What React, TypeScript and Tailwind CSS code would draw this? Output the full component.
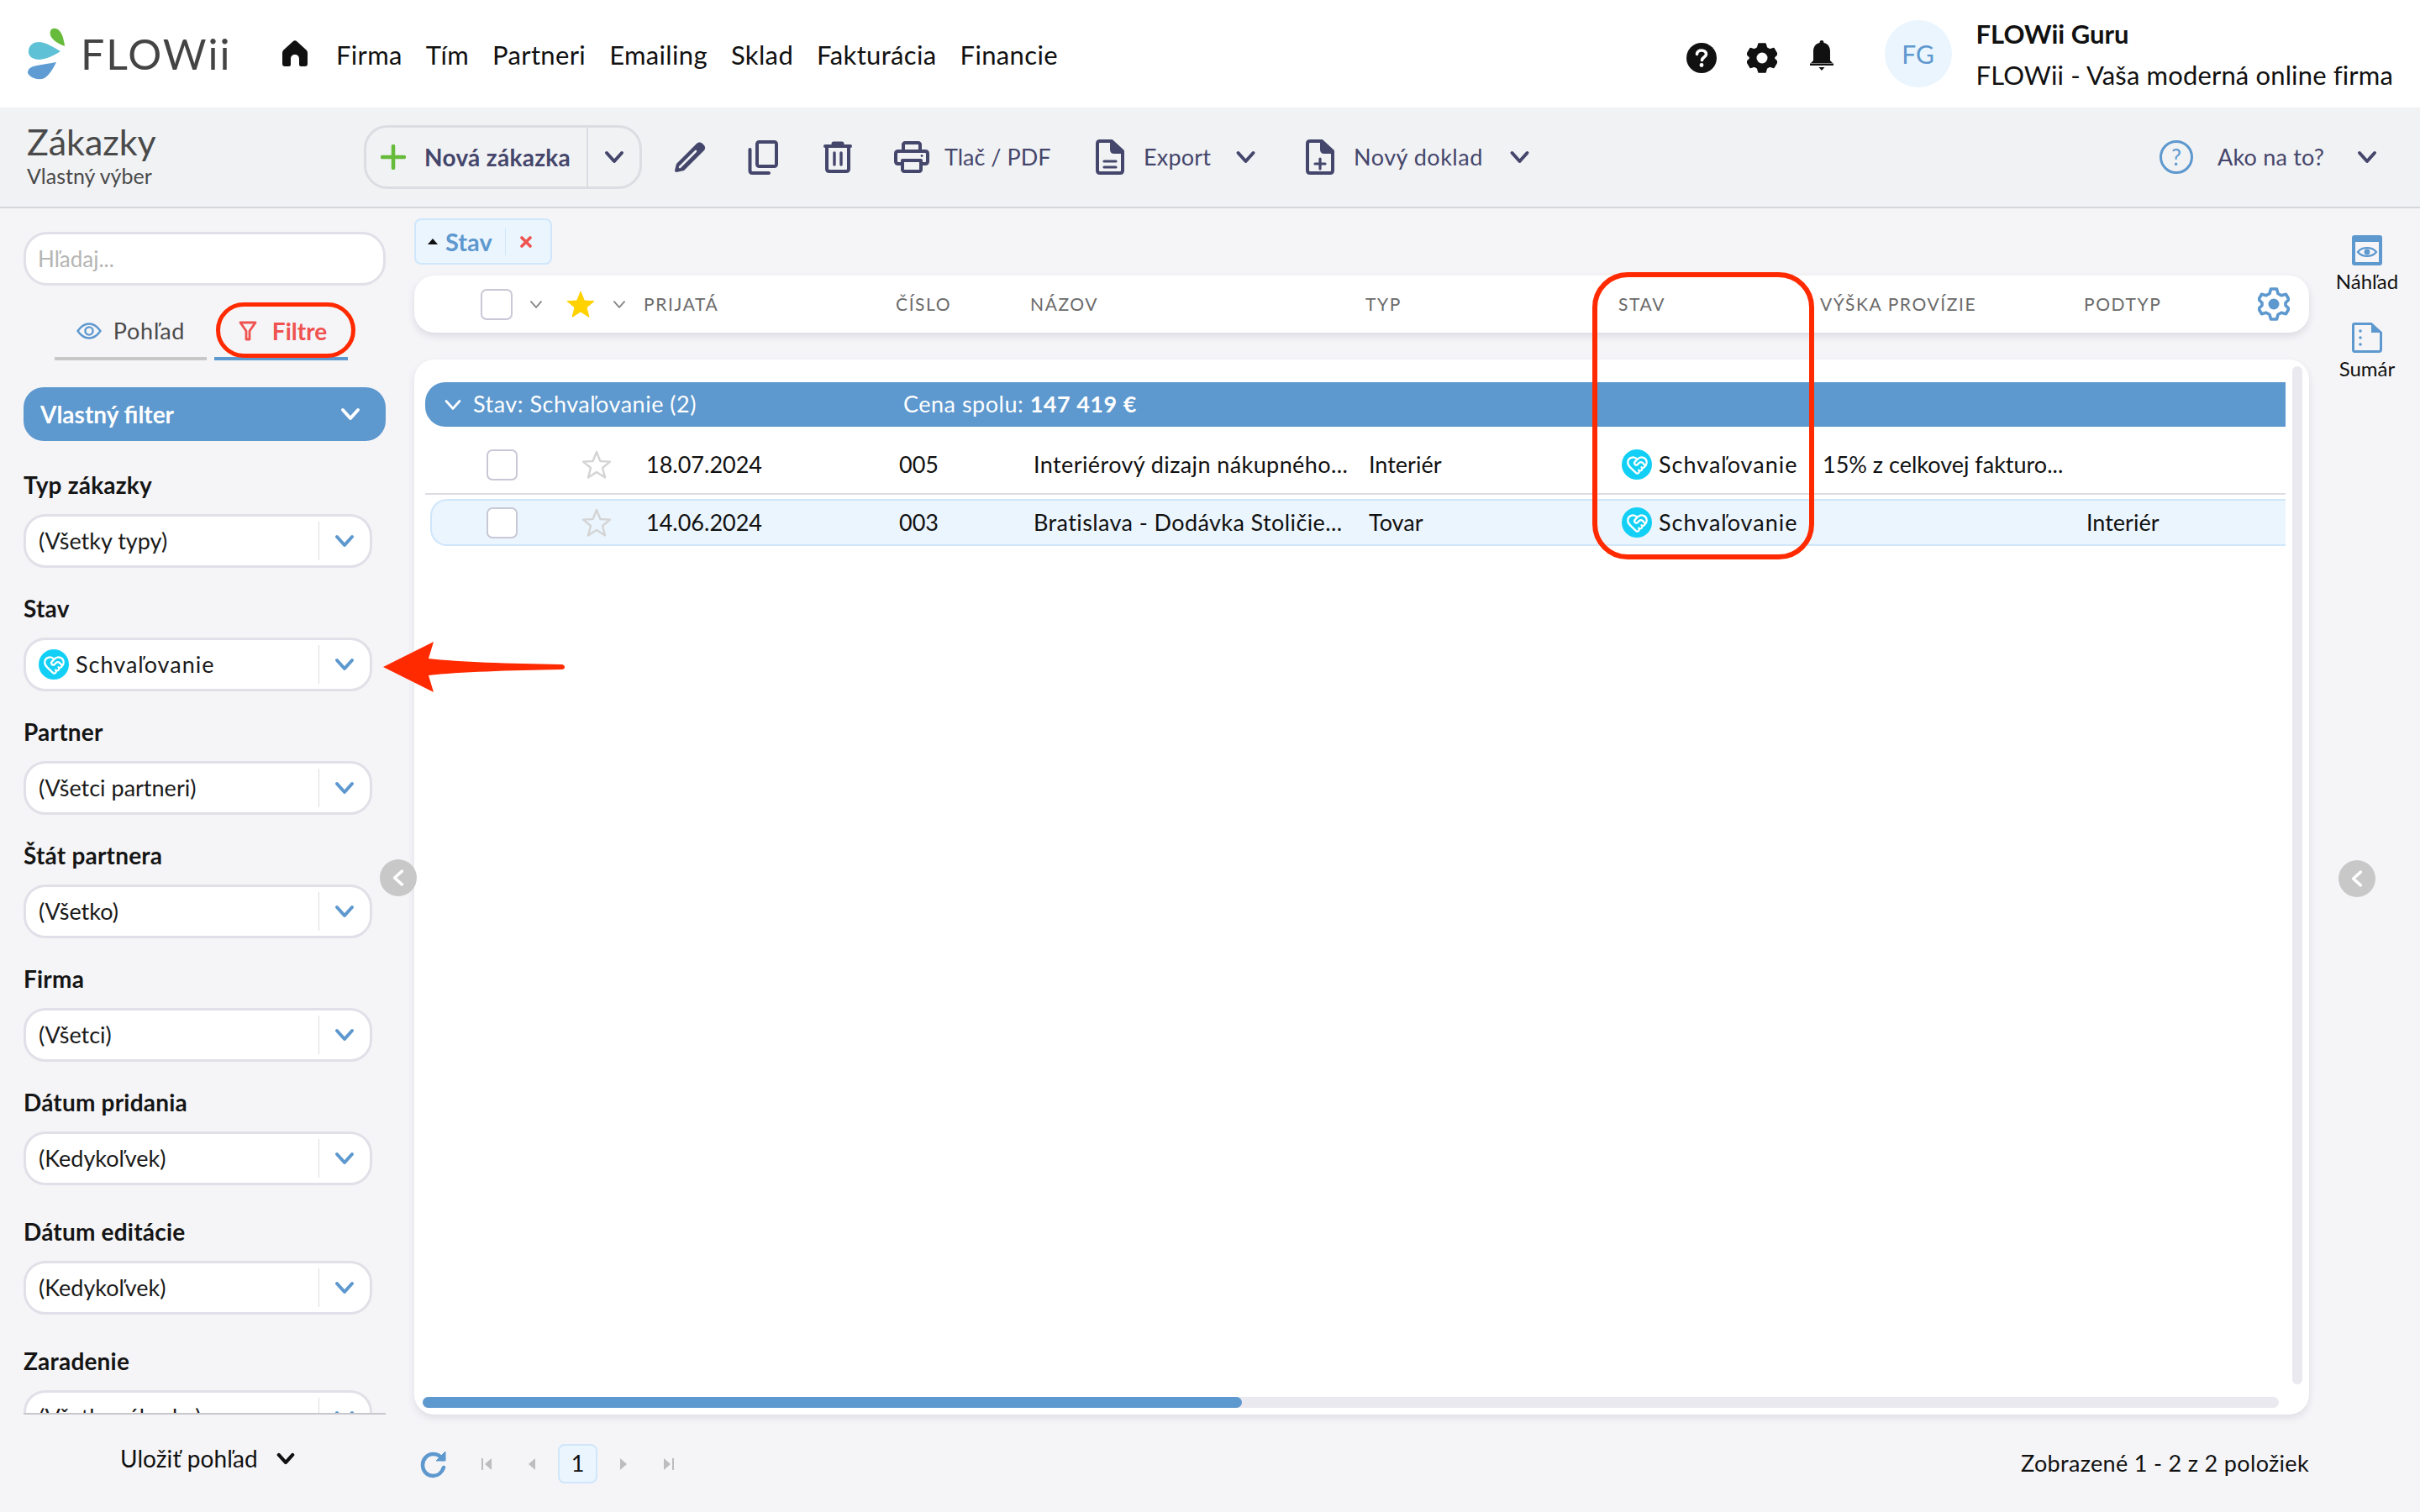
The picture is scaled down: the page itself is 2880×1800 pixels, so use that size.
import { HeartHandshake } from 'lucide-react';

const INK = 'text-[#45466b]';

function Chevron({ className = '', width = 3.4 }: { className?: string; width?: number }) {
  return (
    <svg viewBox="0 0 24 16" fill="none" stroke="currentColor" strokeWidth={width} strokeLinecap="round" strokeLinejoin="round" className={className}>
      <path d="M3 3 L12 13 L21 3" />
    </svg>
  );
}

function Star({ filled = false, className = '' }: { filled?: boolean; className?: string }) {
  return (
    <svg viewBox="0 0 36 34" className={className} fill={filled ? '#ffd200' : 'none'} stroke={filled ? '#ffd200' : '#d4d4d4'} strokeWidth={filled ? 1 : 2.4} strokeLinejoin="round">
      <path d="M18 2 L22.4 13 L34 13.6 L25 21 L28 32.4 L18 26 L8 32.4 L11 21 L2 13.6 L13.6 13 Z" />
    </svg>
  );
}

function Logo() {
  return (
    <svg viewBox="0 0 46 62" className="w-[46px] h-[62px]">
      <path d="M31 1 C37 0 41 5 43 12 C44 16 45 20 45 22 C39 20 30 15 28 9 C27 5 28 2 31 1 Z" fill="#66bb3a" />
      <path d="M2 27 C3 20 8 17 15 17 C24 18 33 24 40 28 C33 33 24 37 15 38 C7 38 1 34 2 27 Z" fill="#5fc1d6" />
      <path d="M35 41 C31 49 27 56 21 60 C14 63 4 60 1 54 C1 48 6 46 12 45 C19 44 28 42 35 41 Z" fill="#5e9cd3" />
    </svg>
  );
}

function StatusIcon() {
  return (
    <span className="w-[36px] h-[36px] rounded-full bg-[#12d0f5] flex items-center justify-center shrink-0">
      <HeartHandshake className="w-[27px] h-[27px] text-white" strokeWidth={2} />
    </span>
  );
}

function ToolIcon({ kind }: { kind: 'pencil' | 'copy' | 'trash' | 'print' | 'export' | 'doc' }) {
  const c = '#45466b';
  if (kind === 'pencil') {
    return (
      <svg viewBox="0 0 38 38" className="w-[38px] h-[38px]">
        <path d="M27 3 C29 1 32 1 34 3 L36 5 C37.500 7 37.500 9 36 11 L12 35 L3 37 C2 37 1 36 1 35 L3 27 Z" fill={c} />
        <path d="M7 31 L26 12" stroke="#f1f2f4" strokeWidth="2.6" strokeLinecap="round" />
      </svg>
    );
  }
  if (kind === 'copy') {
    return (
      <svg viewBox="0 0 36 41" fill="none" stroke={c} strokeWidth="4" strokeLinecap="round" strokeLinejoin="round" className="w-[36px] h-[41px]">
        <rect x="11" y="2" width="23" height="29" rx="2.500" />
        <path d="M2.500 11 V36 C2.500 38 3.500 39 5.500 39 H25" />
      </svg>
    );
  }
  if (kind === 'trash') {
    return (
      <svg viewBox="0 0 34 38" fill="none" stroke={c} strokeWidth="4" strokeLinecap="round" strokeLinejoin="round" className="w-[34px] h-[38px]">
        <path d="M2 6 H32" />
        <path d="M12 3 H22" strokeWidth="5" />
        <path d="M4 7 V33 C4 35 5 36 7 36 H27 C29 36 30 35 30 33 V7" />
        <path d="M13 14 V28 M21 14 V28" strokeWidth="3.400" />
      </svg>
    );
  }
  if (kind === 'print') {
    return (
      <svg viewBox="0 0 42 38" fill="none" stroke={c} strokeWidth="4" strokeLinecap="round" strokeLinejoin="round" className="w-[42px] h-[38px]">
        <path d="M11 12 V4 C11 3 12 2 13 2 H29 C30 2 31 3 31 4 V12" />
        <path d="M10 27 H5 C3 27 2 26 2 24 V15 C2 13 3 12 5 12 H37 C39 12 40 13 40 15 V24 C40 26 39 27 37 27 H32" />
        <path d="M10 23 H32 V34 C32 35 31 36 30 36 H12 C11 36 10 35 10 34 Z" />
        <circle cx="33" cy="17.500" r="1" fill={c} strokeWidth="1" />
      </svg>
    );
  }
  return (
    <svg viewBox="0 0 34 42" fill="none" stroke={c} strokeWidth="4" strokeLinecap="round" strokeLinejoin="round" className="w-[34px] h-[42px]">
      <path d="M5 2 H19 L32 14 V37 C32 39 31 40 29 40 H5 C3 40 2 39 2 37 V5 C2 3 3 2 5 2 Z" />
      <path d="M19 3 V12 C19 14 20 15 22 15 H31" fill={c} />
      {kind === 'export' ? <path d="M10 26 H24 M10 33 H24" strokeWidth="3.200" /> : <path d="M17 23 V35 M11 29 H23" strokeWidth="3.200" />}
    </svg>
  );
}

const NAV = ['Firma', 'Tím', 'Partneri', 'Emailing', 'Sklad', 'Fakturácia', 'Financie'];

const FILTERS: { label: string; value: string; gap: string; icon?: boolean }[] = [
  { label: 'Typ zákazky', value: '(Všetky typy)', gap: 'mb-[33px]' },
  { label: 'Stav', value: 'Schvaľovanie', gap: 'mb-[33px]', icon: true },
  { label: 'Partner', value: '(Všetci partneri)', gap: 'mb-[33px]' },
  { label: 'Štát partnera', value: '(Všetko)', gap: 'mb-[33px]' },
  { label: 'Firma', value: '(Všetci)', gap: 'mb-[33px]' },
  { label: 'Dátum pridania', value: '(Kedykoľvek)', gap: 'mb-[40px]' },
  { label: 'Dátum editácie', value: '(Kedykoľvek)', gap: 'mb-[40px]' },
  { label: 'Zaradenie', value: '(Všetky zákazky)', gap: '' },
];

function Filter({ label, value, gap, icon }: { label: string; value: string; gap: string; icon?: boolean }) {
  return (
    <div className={gap}>
      <div className="h-[30px] mb-[20px] flex items-center text-[28px] tracking-[0.2px] font-bold text-[#151515]">{label}</div>
      <div className="w-[415px] h-[64px] rounded-[26px] bg-white border-[3px] border-[#e0e0e8] flex items-center pl-[15px]">
        {icon && <span className="mr-[8px]"><StatusIcon /></span>}
        <span className={`flex-1 text-[27px] text-[#1a1a1a] whitespace-nowrap ${icon ? 'tracking-[1px]' : ''}`}>{value}</span>
        <span className="w-[1.500px] h-[46px] bg-[#dcdce2]" />
        <span className="w-[60px] flex justify-center">
          <Chevron className="w-[24px] h-[16px] text-[#5d98ce]" width={4} />
        </span>
      </div>
    </div>
  );
}

const PAGER_GREY = '#bdbdbd';

export default function App() {
  return (
    <div className="relative w-[2880px] h-[1800px] overflow-hidden bg-[#f5f5f8] flex flex-col font-[Lato,sans-serif] text-[#111]">
      {/* top bar */}
      <header className="h-[128px] bg-white flex items-center pl-[32px] pr-[32px] shrink-0">
        <Logo />
        <span className="ml-[18px] w-[200px] text-[50px] font-normal tracking-[2px] leading-none text-[#444]">FLOWii</span>
        <svg viewBox="0 0 30 32" className="ml-[40px] w-[30px] h-[32px]">
          <path d="M13 1 C14 0 16 0 17 1 L28 11 C29 12 30 13 30 15 V28 C30 30 29 31 27 31 H22 C21 31 20 30 20 29 V22 C20 19 18 17 15 17 C12 17 10 19 10 22 V29 C10 30 9 31 8 31 H3 C1 31 0 30 0 28 V15 C0 13 1 12 2 11 Z" fill="#111" />
        </svg>
        <nav className="ml-[34px] mt-[2px] flex items-center gap-[28px] text-[31px] tracking-[0.35px]">
          {NAV.map(n => <span key={n}>{n}</span>)}
        </nav>
        <div className="ml-auto flex items-center">
          <svg viewBox="0 0 36 36" className="mt-[10px] w-[36px] h-[36px]">
            <circle cx="18" cy="18" r="18" fill="#111" />
            <path d="M12.500 13.500 C12.500 10.500 15 9 18 9 C21 9 23.500 10.800 23.500 13.500 C23.500 17 19 17 18.500 20.500" fill="none" stroke="#fff" strokeWidth="3.600" strokeLinecap="round" />
            <circle cx="18" cy="26.500" r="2.400" fill="#fff" />
          </svg>
          <svg viewBox="0 0 36 36" className="mt-[10px] ml-[36px] w-[36px] h-[36px]">
            <path d="M14 1 H22 L23.500 6 L27 8 L32 6.500 L36 13.500 L32.500 17 V19 L36 22.500 L32 29.500 L27 28 L23.500 30 L22 35 H14 L12.500 30 L9 28 L4 29.500 L0 22.500 L3.500 19 V17 L0 13.500 L4 6.500 L9 8 L12.500 6 Z" fill="#111" stroke="#111" strokeLinejoin="round" strokeWidth="1.500" />
            <circle cx="18" cy="18" r="6.500" fill="#fff" />
          </svg>
          <svg viewBox="0 0 30 36" className="mt-[4px] ml-[38px] w-[30px] h-[36px]">
            <path d="M15 0 C16.500 0 17.500 1 17.500 3 C22.500 4 25 8 25 13 V24 L28 27 H2 L5 24 V13 C5 8 7.500 4 12.500 3 C12.500 1 13.500 0 15 0 Z" fill="#111" />
            <path d="M1 27.500 H29 V30 H1 Z" fill="#111" />
            <path d="M11.500 32 H18.500 L15 36 Z" fill="#111" />
          </svg>
          <div className="ml-[60px] w-[80px] h-[80px] rounded-full bg-[#ebf5fe] flex items-center justify-center text-[30px] text-[#5d98ce]">FG</div>
          <div className="ml-[29px] flex flex-col gap-[13px]">
            <span className="text-[31px] leading-[36px] font-bold">FLOWii Guru</span>
            <span className="text-[31px] tracking-[0.15px] leading-[36px] whitespace-nowrap">FLOWii - Vaša moderná online firma</span>
          </div>
        </div>
      </header>

      {/* toolbar */}
      <div className={`h-[120px] bg-[#f1f2f4] border-b-[2px] border-[#d5d6da] flex items-center pl-[32px] pr-[51px] shrink-0 ${INK}`}>
        <div className="w-[401px] -mt-[6px]">
          <div className="text-[43px] leading-[50px] text-[#4a4a4a]">Zákazky</div>
          <div className="text-[25px] leading-[30px] text-[#4a4a4a]">Vlastný výber</div>
        </div>
        <div className="w-[331px] h-[76px] rounded-[28px] border-[3px] border-[#dcdde3] flex items-center pl-[17px]">
          <svg viewBox="0 0 30 30" className="w-[30px] h-[30px]">
            <path d="M15 2 V28 M2 15 H28" stroke="#66bb3a" strokeWidth="4.500" strokeLinecap="round" />
          </svg>
          <span className="ml-[22px] w-[193px] text-[28px] tracking-[0.3px] font-bold whitespace-nowrap">Nová zákazka</span>
          <span className="w-[2px] h-[72px] bg-[#dcdde3]" />
          <span className="flex-1 flex justify-center"><Chevron className="w-[24px] h-[16px]" width={4} /></span>
        </div>
        <div className="ml-[38px]"><ToolIcon kind="pencil" /></div>
        <div className="ml-[50px]"><ToolIcon kind="copy" /></div>
        <div className="ml-[54px]"><ToolIcon kind="trash" /></div>
        <div className="ml-[50px]"><ToolIcon kind="print" /></div>
        <span className="ml-[18px] w-[126px] text-[27px] whitespace-nowrap">Tlač / PDF</span>
        <div className="ml-[54px]"><ToolIcon kind="export" /></div>
        <span className="ml-[23px] w-[82px] text-[27px] tracking-[0.2px]">Export</span>
        <Chevron className="ml-[27px] w-[25px] h-[16px]" width={4} />
        <div className="ml-[59px]"><ToolIcon kind="doc" /></div>
        <span className="ml-[23px] w-[158px] text-[27px] tracking-[0.5px] whitespace-nowrap">Nový doklad</span>
        <Chevron className="ml-[27px] w-[25px] h-[16px]" width={4} />
        <div className="ml-auto flex items-center">
          <span className="w-[40px] h-[40px] rounded-full border-[3.500px] border-[#5d98ce] flex items-center justify-center text-[26px] leading-none text-[#5d98ce]">?</span>
          <span className="ml-[29px] w-[128px] text-[27px] tracking-[0.2px] whitespace-nowrap">Ako na to?</span>
          <Chevron className="ml-[38px] w-[24px] h-[16px]" width={4} />
        </div>
      </div>

      {/* body */}
      <div className="relative flex-1 flex">
        {/* left filter column */}
        <aside className="w-[493px] pl-[28px] shrink-0">
          <div className="w-[431px] mt-[28px] h-[64px] rounded-[28px] bg-white border-[3px] border-[#e0e0e8] flex items-center pl-[14px] text-[26px] text-[#b5b5b5]">Hľadaj...</div>
          <div className="mt-[20px] h-[69px] flex items-end">
            <div className="ml-[37px] w-[181px] h-full border-b-[4px] border-[#c8c8c8] flex items-center justify-center gap-[14px] text-[27px] tracking-[0.8px] text-[#4a4a4a] pt-[3px]">
              <svg viewBox="0 0 30 20" fill="none" stroke="#5d98ce" strokeWidth="2.400" className="w-[30px] h-[20px]">
                <path d="M1.500 10 C6 3.500 10 1.500 15 1.500 C20 1.500 24 3.500 28.500 10 C24 16.500 20 18.500 15 18.500 C10 18.500 6 16.500 1.500 10 Z" />
                <circle cx="15" cy="10" r="4.600" />
              </svg>
              Pohľad
            </div>
            <div className="ml-[9px] w-[159px] h-full border-b-[4px] border-[#5d98ce] flex items-center justify-center gap-[18px] text-[28px] font-bold text-[#ef5350] pt-[3px] pl-[4px]">
              <svg viewBox="0 0 22 24" fill="none" stroke="#ef5350" strokeWidth="2.800" strokeLinejoin="round" className="w-[22px] h-[24px]">
                <path d="M2 2 H20 L13 12 V22 H9 V12 Z" />
              </svg>
              Filtre
            </div>
          </div>
          <div className="mt-[32px] w-[431px] h-[64px] rounded-[24px] bg-[#5d98ce] flex items-center justify-between pl-[20px] pr-[30px] text-[28px] font-bold text-white">
            Vlastný filter
            <Chevron className="w-[24px] h-[16px]" width={4} />
          </div>
          <div className="w-[431px] h-[1159px] pt-[37px] overflow-hidden border-b-[2px] border-[#c8c8cc]">
            {FILTERS.map(f => <Filter key={f.label} {...f} />)}
          </div>
          <div className="mt-[31px] pl-[115px] flex items-center text-[28px] text-[#111]">
            <span className="w-[172px] whitespace-nowrap tracking-[0.1px]">Uložiť pohľad</span>
            <Chevron className="ml-[14px] w-[22px] h-[15px]" width={4.500} />
          </div>
        </aside>

        {/* main table */}
        <main className="w-[2255px] shrink-0">
          <div className="mt-[12px] w-[164px] h-[55px] rounded-[8px] bg-[#ebf5fe] border-[2px] border-[#cfe6fb] flex items-center pl-[14px]">
            <span className="w-0 h-0 border-l-[6px] border-r-[6px] border-b-[7px] border-l-transparent border-r-transparent border-b-[#111]" />
            <span className="ml-[9px] text-[29px] font-bold text-[#5d98ce]">Stav</span>
            <span className="ml-[15px] w-[1.500px] h-[32px] bg-[#cfe6fb]" />
            <svg viewBox="0 0 14 14" className="ml-[17px] w-[14px] h-[14px]">
              <path d="M2 2 L12 12 M12 2 L2 12" stroke="#ef5350" strokeWidth="3.600" strokeLinecap="round" />
            </svg>
          </div>

          <div className="mt-[13px] h-[68px] rounded-[24px] bg-white shadow-[0_4px_8px_rgba(60,60,90,0.14)] flex items-center pl-[79px] text-[21px] tracking-[1.600px] text-[#6b6b6b]">
            <div className="grid grid-cols-[58px_43px_56px_37px_300px_160px_399px_301px_240px_314px_auto] items-center w-full">
              <span className="w-[38px] h-[37px] rounded-[7px] bg-white border-[2.500px] border-[#c8c8d6]" />
              <Chevron className="w-[16px] h-[11px] text-[#8a8a8a]" width={3} />
              <Star filled className="w-[36px] h-[34px]" />
              <Chevron className="w-[16px] h-[11px] text-[#8a8a8a]" width={3} />
              <span>PRIJATÁ</span>
              <span>ČÍSLO</span>
              <span>NÁZOV</span>
              <span>TYP</span>
              <span>STAV</span>
              <span className="whitespace-nowrap">VÝŠKA PROVÍZIE</span>
              <span>PODTYP</span>
            </div>
          </div>

          <div className="mt-[32px] h-[1256px] rounded-[24px] bg-white shadow-[0_4px_8px_rgba(60,60,90,0.12)] pt-[8px] flex flex-col">
            <div className="h-[1212px] flex pl-[13px]">
              <div className="w-[2214px] pt-[19px]">
                <div className="h-[53px] rounded-l-[24px] bg-[#5d98ce] flex items-center pl-[22px] text-[27px] tracking-[0.5px] text-white">
                  <Chevron className="w-[22px] h-[14px]" width={3.400} />
                  <span className="ml-[13px] w-[512px] whitespace-nowrap">Stav: Schvaľovanie (2)</span>
                  <span>Cena spolu: <b className="font-bold">147 419 €</b></span>
                </div>
                <div className="h-[81px] pt-[11px] grid grid-cols-[113px_77px_301px_160px_399px_301px_239px_314px_1fr] items-center pl-[73px] border-b-[2px] border-[#dcdce4] text-[27px]">
                  <span className="w-[37px] h-[37px] rounded-[7px] bg-white border-[2.500px] border-[#c8c8d6]" />
                  <Star className="w-[36px] h-[34px]" />
                  <span>18.07.2024</span>
                  <span>005</span>
                  <span className="whitespace-nowrap tracking-[0.4px]">Interiérový dizajn nákupného...</span>
                  <span>Interiér</span>
                  <span className="flex items-center gap-[8px] tracking-[1px]"><StatusIcon />Schvaľovanie</span>
                  <span className="whitespace-nowrap">15% z celkovej fakturo...</span>
                  <span />
                </div>
                <div className="ml-[6px] mt-[5px] h-[56px] rounded-l-[20px] bg-[#ebf5fe] border-[2px] border-r-0 border-[#cfe6fb] grid grid-cols-[113px_77px_301px_160px_399px_301px_239px_314px_1fr] items-center pl-[65px] text-[27px]">
                  <span className="w-[37px] h-[37px] rounded-[7px] bg-white border-[2.500px] border-[#c8c8d6]" />
                  <Star className="w-[36px] h-[34px]" />
                  <span>14.06.2024</span>
                  <span>003</span>
                  <span className="whitespace-nowrap tracking-[0.4px]">Bratislava - Dodávka Stoličie...</span>
                  <span>Tovar</span>
                  <span className="flex items-center gap-[8px] tracking-[1px]"><StatusIcon />Schvaľovanie</span>
                  <span />
                  <span>Interiér</span>
                </div>
              </div>
              <div className="ml-[8px] w-[12px] h-full rounded-full bg-[#e9e9ef]" />
            </div>
            <div className="mt-[15px] ml-[10px] w-[2209px] h-[13px] rounded-full bg-[#e9e9ef]">
              <div className="w-[975px] h-full rounded-full bg-[#5d98ce]" />
            </div>
          </div>

          <div className="mt-[35px] h-[47px] flex items-center pl-[7px]">
            <svg viewBox="0 0 32 34" fill="none" stroke="#5d98ce" strokeWidth="4.500" className="w-[32px] h-[34px]">
              <path d="M28 21 C26 27 21 31 15.500 31 C8.500 31 3 25.500 3 18 C3 11 8.500 5 15.500 5 C20 5 24 7 26.500 11" strokeLinecap="round" />
              <path d="M30 2 V13 H19 Z" fill="#5d98ce" strokeWidth="1" strokeLinejoin="round" />
            </svg>
            <svg viewBox="0 0 16 16" className="ml-[40px] w-[16px] h-[16px]">
              <path d="M1 1 H3 V15 H1 Z M13 1 V15 L5 8 Z" fill={PAGER_GREY} />
            </svg>
            <svg viewBox="0 0 10 16" className="ml-[40px] w-[10px] h-[16px]">
              <path d="M9 1 V15 L1 8 Z" fill={PAGER_GREY} />
            </svg>
            <span className="ml-[26px] w-[47px] h-[47px] rounded-[8px] bg-[#ebf5fe] border-[2px] border-[#cfe6fb] flex items-center justify-center text-[27px]">1</span>
            <svg viewBox="0 0 10 16" className="ml-[26px] w-[10px] h-[16px]">
              <path d="M1 1 V15 L9 8 Z" fill={PAGER_GREY} />
            </svg>
            <svg viewBox="0 0 16 16" className="ml-[40px] w-[16px] h-[16px]">
              <path d="M3 1 V15 L11 8 Z M13 1 H15 V15 H13 Z" fill={PAGER_GREY} />
            </svg>
            <span className="ml-auto text-[27px] tracking-[0.33px] whitespace-nowrap">Zobrazené 1 - 2 z 2 položiek</span>
          </div>
        </main>

        {/* right rail */}
        <aside className="flex-1 pl-[6px] pt-[32px] flex flex-col items-center">
          <svg viewBox="0 0 36 36" className="w-[36px] h-[36px]">
            <path d="M3 0 H33 C35 0 36 1 36 3 V33 C36 35 35 36 33 36 H3 C1 36 0 35 0 33 V3 C0 1 1 0 3 0 Z M4 8 V32 H32 V8 Z" fill="#5d98ce" fillRule="evenodd" />
            <path d="M7 20 C12 13.500 24 13.500 29 20 C24 26.500 12 26.500 7 20 Z" fill="none" stroke="#5d98ce" strokeWidth="2.200" />
            <circle cx="18" cy="20" r="3.400" fill="#5d98ce" />
          </svg>
          <span className="mt-[4px] h-[30px] flex items-center text-[24px]">Náhľad</span>
          <svg viewBox="0 0 36 36" className="mt-[34px] w-[36px] h-[36px]">
            <path d="M3 1.500 H23 L34.500 12 V32 C34.500 33.500 33.500 34.500 32 34.500 H3 C2 34.500 1.500 33.500 1.500 32 V3 C1.500 2 2 1.500 3 1.500 Z" fill="none" stroke="#5d98ce" strokeWidth="3" strokeLinejoin="round" />
            <path d="M23 1 L35 12 H23 Z" fill="#5d98ce" />
            <circle cx="10" cy="10" r="1.800" fill="#5d98ce" />
            <circle cx="10" cy="18" r="1.800" fill="#5d98ce" />
            <circle cx="10" cy="26" r="1.800" fill="#5d98ce" />
          </svg>
          <span className="mt-[4px] h-[30px] flex items-center text-[24px]">Sumár</span>
        </aside>

        {/* gear on the header row */}
        <svg viewBox="0 0 38 40" fill="none" stroke="#5d98ce" strokeWidth="3.600" strokeLinejoin="round" className="absolute left-[2687px] top-[94px] w-[38px] h-[40px]">
          <path d="M15.500 2 H22.500 L24 7.500 L28 9.800 L33.500 8.300 L37 14.500 L33 18.500 V21.500 L37 25.500 L33.500 31.700 L28 30.200 L24 32.500 L22.500 38 H15.500 L14 32.500 L10 30.200 L4.500 31.700 L1 25.500 L5 21.500 V18.500 L1 14.500 L4.500 8.300 L10 9.800 L14 7.500 Z" />
          <circle cx="19" cy="20" r="6.500" fill="#5d98ce" stroke="none" />
        </svg>

        {/* collapse handles */}
        <button className="absolute left-[452px] top-[775px] w-[44px] h-[44px] rounded-full bg-[#c8c8c8] flex items-center justify-center">
          <Chevron className="w-[22px] h-[14px] rotate-90 text-white" width={4} />
        </button>
        <button className="absolute left-[2783px] top-[776px] w-[44px] h-[44px] rounded-full bg-[#c8c8c8] flex items-center justify-center">
          <Chevron className="w-[22px] h-[14px] rotate-90 text-white" width={4} />
        </button>
      </div>

      {/* red annotations drawn on top of the screenshot */}
      <div className="absolute left-[257px] top-[360px] w-[166px] h-[66px] rounded-[33px] border-[5px] border-[#ff2a00]" />
      <div className="absolute left-[1895px] top-[324px] w-[264px] h-[342px] rounded-[42px] border-[6px] border-[#ff2a00]" />
      <svg viewBox="0 0 216 60" className="absolute left-[456px] top-[764px] w-[216px] h-[60px]">
        <path d="M0 30 L60 0 L54 20 C90 24 150 26 212 27 C215 27 216 29 216 30 C216 32 215 33 212 33 C150 34 90 36 54 40 L60 60 Z" fill="#ff2a00" />
      </svg>
    </div>
  );
}
